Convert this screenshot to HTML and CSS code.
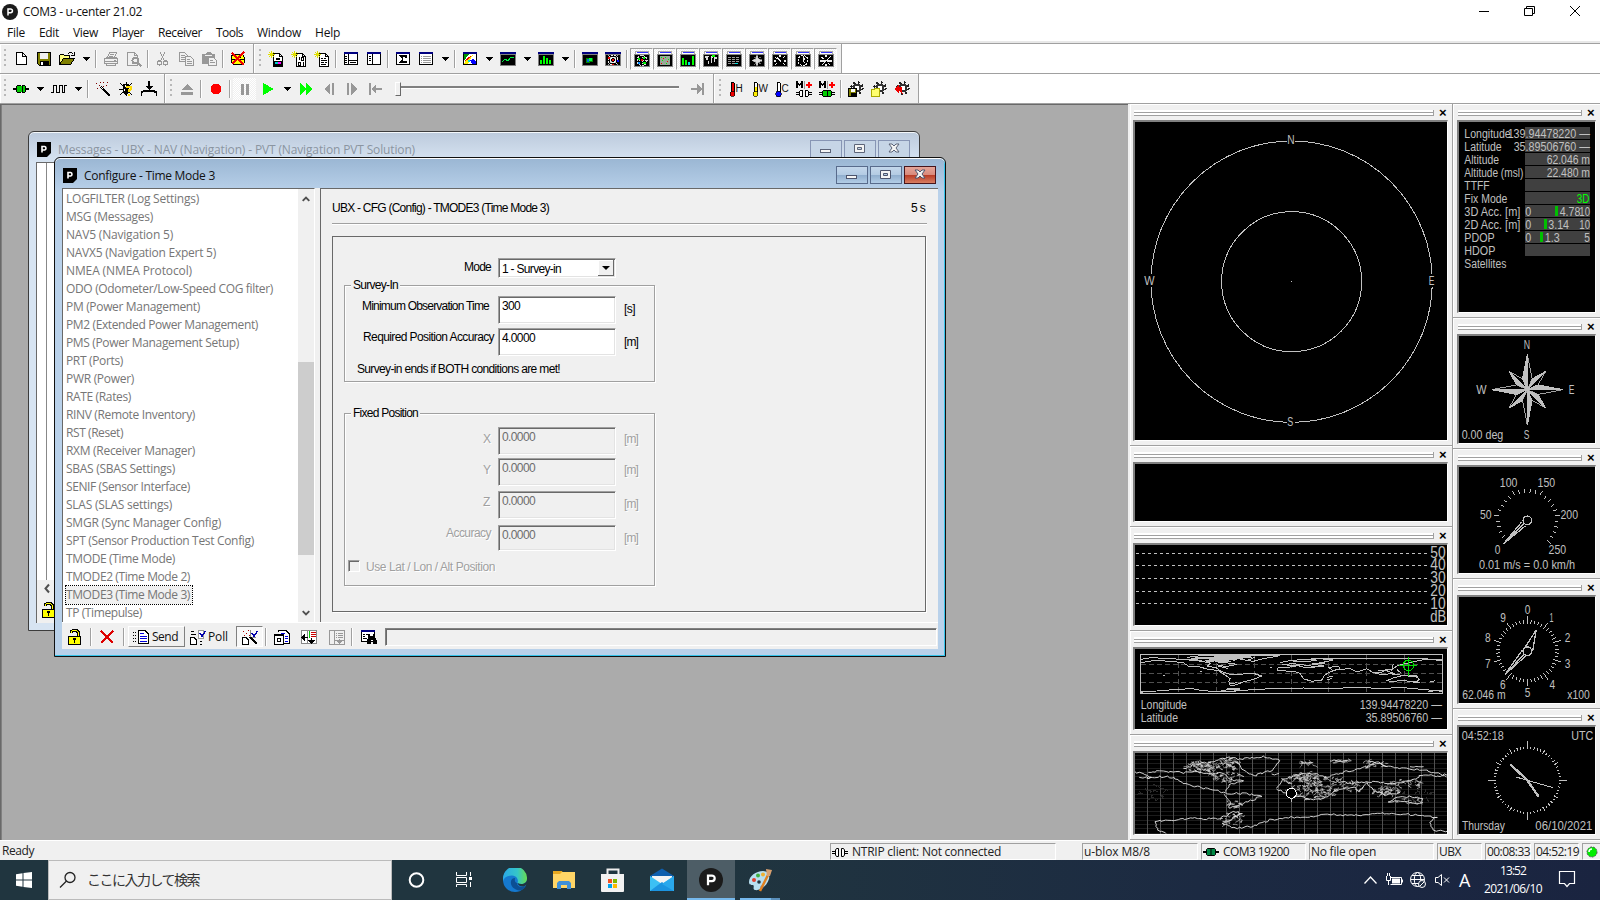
FILE: index.html
```html
<!DOCTYPE html>
<html lang="en">
<head>
<meta charset="utf-8">
<title>COM3 - u-center 21.02</title>
<link rel="stylesheet" href="styles.css">
</head>
<body>
<svg class="defs" width="0" height="0">
  <symbol id="plogo" viewBox="0 0 16 16"><circle cx="8" cy="8" r="8" fill="#1b1b1b"/><path d="M6 11.500V5h2.600a1.800 1.800 0 0 1 0 3.700H6" fill="none" stroke="#fff" stroke-width="1.500"/></symbol>
  <symbol id="psq" viewBox="0 0 14 15"><path d="M0 0H14V11L10 15H0Z" fill="#000"/><path d="M5 10.500V4.500h2.600a1.800 1.800 0 0 1 0 3.500H5" fill="none" stroke="#fff" stroke-width="1.600"/></symbol>
  <symbol id="new" viewBox="0 0 16 16"><path d="M3.500 1.500H9.500L13.500 5.500V13.500H3.500ZM9.500 1.500V5.500H13.500" fill="#fff" stroke="#000"/></symbol>
  <symbol id="save" viewBox="0 0 16 16"><path d="M1.500 1.500H14.500V14.500H3.500L1.500 12.500Z" fill="#808000" stroke="#000"/><path d="M4 2H12V8H4Z" fill="#f0f0f0"/><path d="M4 10H13V14H4Z"/><path d="M5 11H7V14H5Z" fill="#fff"/></symbol>
  <symbol id="open" viewBox="0 0 16 16"><path d="M.500 13.500V4.500L1.500 3.500H4.500L5.500 4.500H10.500V7.500" fill="#ffff80" stroke="#000"/><path d="M.500 13.500L4.500 7.500H15.500L11.500 13.500Z" fill="#808000" stroke="#000"/><path d="M9 2.500L10.500 1.500H12.500L14.500 3.500M12 4.500H15V1" fill="none" stroke="#000"/></symbol>
  <symbol id="print" viewBox="0 0 16 16"><g fill="none" stroke="#989898"><path d="M4.500 6.500L6.500 1.500H13.500L11.500 6.500M7 3.500H11M6 5.500H10M1.500 7.500H14.500V12.500H1.500ZM2 10.500H14M3.500 12.500V14.500H12.500V12.500M11 9.500H13M3 6.500H14"/></g></symbol>
  <symbol id="preview" viewBox="0 0 16 16"><g fill="none" stroke="#989898"><path d="M1.500 1.500H8.500L11.500 4.500V14.500H1.500ZM8.500 1.500V4.500H11.500"/><circle cx="9.500" cy="9.500" r="3" stroke-width="2"/><path d="M11.500 11.500L15.500 15.500" stroke-width="2"/></g></symbol>
  <symbol id="cut" viewBox="0 0 16 16"><g fill="none" stroke="#989898" stroke-width="1.300"><path d="M5 1L9.500 10M10 1L5.500 10"/><circle cx="4.500" cy="12" r="2"/><circle cx="10.500" cy="12" r="2"/></g></symbol>
  <symbol id="copy" viewBox="0 0 16 16"><g fill="#f0f0f0" stroke="#989898"><path d="M1.500 1.500H6.500L9.500 4.500V10.500H1.500ZM3 4.500H7M3 6.500H7M3 8.500H7"/><path d="M7.500 5.500H12.500L15.500 8.500V14.500H7.500ZM9 8.500H12M9 10.500H14M9 12.500H14"/></g></symbol>
  <symbol id="paste" viewBox="0 0 16 16"><path d="M1 3H4L6 1H9L11 3H14V13H1Z" fill="#989898"/><path d="M4 4H11" stroke="#f0f0f0"/><path d="M7.500 6.500H12.500L15.500 9.500V14.500H7.500ZM9 9.500H12M9 11.500H14" fill="#f0f0f0" stroke="#989898"/></symbol>
  <symbol id="clear" viewBox="0 0 16 16"><path d="M2.500 3.500H12.500L14.500 6.500V11.500L12.500 13.500H3.500L1.500 11.500V5.500Z" fill="#ff0" stroke="#000"/><path d="M2 8.500H14M5 6.500H11" stroke="#000"/><path d="M2 2L14 14M14 1L2 13" stroke="#e00" stroke-width="1.500"/></symbol>
  <symbol id="doc" viewBox="0 0 16 16"><path d="M5.500 2.500H11.500L14.500 5.500V15.500H5.500ZM11.500 2.500V5.500H14.500" fill="#fff" stroke="#000"/><path d="M3.500 0V7M0 3.500H7M1 1L6 6M6 1L1 6" stroke="#e0e000"/></symbol>
  <symbol id="docc" viewBox="0 0 16 16"><use href="#doc" width="16" height="16"/><path d="M8 6.500H12V9H8ZM6 10H14V15H6Z"/><path d="M7 11H10V13H7Z" fill="#0cc"/><path d="M10 11H13V13H10Z" fill="#f0f"/></symbol>
  <symbol id="docb" viewBox="0 0 16 16"><use href="#doc" width="16" height="16"/><path d="M8.500 6V9M10.500 6.500H12.500V9.500H10.500ZM7.500 11.500H9.500V14.500H7.500ZM12.500 11V15" fill="none" stroke="#000"/></symbol>
  <symbol id="doct" viewBox="0 0 16 16"><use href="#doc" width="16" height="16"/><path d="M7 7.500H9M10 7.500H12M7 9.500H13M7 11.500H10M11 11.500H13M7 13.500H12" stroke="#000"/></symbol>
  <symbol id="win" viewBox="0 0 16 16"><path d="M1.500 2.500H14.500V13.500H1.500Z" fill="#fff" stroke="#000"/><path d="M1 1H15V3H1Z" fill="#000080"/></symbol>
  <symbol id="win1" viewBox="0 0 16 16"><use href="#win" width="16" height="16"/><path d="M5.500 3V13M6 9.500H14M2 5.500H4M2 7.500H4M2 9.500H4M2 11.500H4M7 11.500H13" stroke="#000"/></symbol>
  <symbol id="win2" viewBox="0 0 16 16"><use href="#win" width="16" height="16"/><path d="M6.500 3V13M3 5.500H5M3 7.500H5M3 9.500H5" stroke="#000"/></symbol>
  <symbol id="win3" viewBox="0 0 16 16"><use href="#win" width="16" height="16"/><path d="M11 6.500V5H5.500L8 8L5.500 11H11V9.500" fill="none" stroke="#000" stroke-width="1.400"/></symbol>
  <symbol id="win4" viewBox="0 0 16 16"><use href="#win" width="16" height="16"/><path d="M3 5.500H4M5 5.500H13M3 7.500H4M5 7.500H13M3 9.500H4M5 9.500H13M3 11.500H4M5 11.500H13" stroke="#999"/></symbol>
  <symbol id="tri" viewBox="0 0 16 16"><path d="M4 6H12L8 10Z"/></symbol>
  <symbol id="chart" viewBox="0 0 16 16"><use href="#win" width="16" height="16"/><path d="M2 3H7L2 10Z" fill="#090"/><path d="M2 13L5 8L8 5L11 4L8 9L6 13Z" fill="#fe0"/><path d="M3 10L9 5" stroke="#e00"/><path d="M8 9L12 8L14 11V13H10Z" fill="#00f"/><path d="M6 9H8V11H6Z" fill="#0dd"/></symbol>
  <symbol id="dark" viewBox="0 0 16 16"><path d="M.500 1.500H15.500V14.500H.500Z" fill="#000" stroke="#808080"/><path d="M0 1H16V3H0Z" fill="#000080"/><path d="M1 3.500H15" stroke="#808080"/></symbol>
  <symbol id="tog" viewBox="0 0 16 16"><path d="M.500 3.500H15.500V15.500H.500Z" fill="#000" stroke="#888"/><path d="M1.500 3V.500H14.500V3" fill="#fff" stroke="#aaa"/><path d="M3 1.500H14" stroke="#33f"/></symbol>
  <symbol id="line" viewBox="0 0 16 16"><use href="#dark" width="16" height="16"/><path d="M2 11L5 8L8 10L11 6L14 7" fill="none" stroke="#0e4"/></symbol>
  <symbol id="hist" viewBox="0 0 16 16"><use href="#dark" width="16" height="16"/><path d="M2 9H4V13H2ZM5 5H7V13H5ZM8 7H10V13H8ZM11 9H13V13H11Z" fill="#0f0"/></symbol>
  <symbol id="cam" viewBox="0 0 16 16"><use href="#dark" width="16" height="16"/><path d="M4 7H11V11H8V12H4Z" fill="#080"/><path d="M7 7H10V10H7Z" fill="#0f4"/><path d="M5 8H7V11H5Z" fill="#06d"/></symbol>
  <symbol id="tgt" viewBox="0 0 16 16"><use href="#dark" width="16" height="16"/><g fill="none" stroke="#eee"><circle cx="8" cy="9" r="5" stroke-dasharray="2 1"/><circle cx="8" cy="9" r="2.500"/><path d="M3 4L13 14M13 4L3 14" stroke-width=".700"/></g><path d="M3 6H5V8H3Z" fill="#e00"/><path d="M12 9H14V11H12Z" fill="#00f"/><path d="M7 8H9V10H7ZM7 13H9V14H7Z" fill="#e00"/></symbol>
  <symbol id="sky" viewBox="0 0 16 16"><use href="#tog" width="16" height="16"/><g fill="none" stroke="#ddd"><circle cx="8" cy="9.500" r="5" stroke-dasharray="2 1"/><path d="M8 4V15M2.500 9.500H13.500" stroke-dasharray="1 1"/></g><path d="M4 7H6V9H4ZM9 6H11V8H9ZM9 11H12V13H9Z" fill="#0e0"/><path d="M7 8H9V10H7Z" fill="#e00"/><path d="M4 11H6V13H4Z" fill="#08f"/></symbol>
  <symbol id="dots" viewBox="0 0 16 16"><use href="#tog" width="16" height="16"/><path d="M3 5H13V14H3Z" fill="#9a9"/><path d="M4 6H5V7H4ZM8 6H9V7H8ZM11 8H12V9H11ZM5 9H6V10H5ZM9 12H10V13H9Z" fill="#0e0"/><path d="M6 7H7V8H6ZM10 10H11V11H10ZM4 12H5V13H4Z" fill="#e00"/></symbol>
  <symbol id="bars" viewBox="0 0 16 16"><use href="#tog" width="16" height="16"/><path d="M2 7H4V14H2ZM5 9H7V14H5ZM12 5H14V14H12Z" fill="#0f0"/><path d="M8 11H10V14H8Z" fill="#0dd"/></symbol>
  <symbol id="wmap" viewBox="0 0 16 16"><use href="#tog" width="16" height="16"/><path d="M2 5H6V6H5V9H3V7H2ZM5 10H6V13H5ZM8 5H10V7H9V12H8ZM11 6H14V8H12V11H11Z" fill="#ddd"/><path d="M9 4H12V6H9Z" fill="#0f0"/></symbol>
  <symbol id="table" viewBox="0 0 16 16"><use href="#tog" width="16" height="16"/><path d="M2 6.500H14M2 8.500H14M2 10.500H14M2 12.500H9" stroke="#999" stroke-dasharray="3 1"/><path d="M9 12.500H12" stroke="#0dd"/></symbol>
  <symbol id="rose" viewBox="0 0 16 16"><use href="#tog" width="16" height="16"/><path d="M8 4L9.500 8L13 9.500L9.500 11L8 15L6.500 11L3 9.500L6.500 8ZM4.500 6L7 8M11.500 6L9 8M4.500 13L7 11M11.500 13L9 11" fill="#ddd" stroke="#bbb" stroke-width=".600"/></symbol>
  <symbol id="spd" viewBox="0 0 16 16"><use href="#tog" width="16" height="16"/><path d="M3 6L5 8M8 4V6M13 5L11 7M2 10H4M12 10H14M3 14L5 12M13 14L11 12M5 6L9 11" stroke="#eee" stroke-width="1.200"/></symbol>
  <symbol id="clk" viewBox="0 0 16 16"><use href="#tog" width="16" height="16"/><path d="M8 5V10L10 12M8 10L10 7" stroke="#eee" fill="none"/><circle cx="8" cy="9.500" r="5" fill="none" stroke="#eee" stroke-dasharray="2 1"/></symbol>
  <symbol id="alt" viewBox="0 0 16 16"><use href="#tog" width="16" height="16"/><path d="M3 6L6 8M8 4V6M13 5L8 10H2M9 10H14M4 14L7 11M12 14L10 12M8 13V15" stroke="#eee" fill="none" stroke-width="1.200"/></symbol>
  <symbol id="plug" viewBox="0 0 16 16"><path d="M0 8H16" stroke="#000" stroke-width="2"/><path d="M4.500 4.500H7V11.500H4.500L3.500 10.500V5.500ZM9 4.500H11.500L12.500 5.500V10.500L11.500 11.500H9Z" fill="#0c0" stroke="#000"/><path d="M7 5H9V11H7Z" fill="#0c0"/></symbol>
  <symbol id="plugd" viewBox="0 0 16 16"><path d="M0 8H16" stroke="#000" stroke-width="2"/><path d="M4.500 4.500H11.500L12.500 5.500V10.500L11.500 11.500H4.500L3.500 10.500V5.500Z" fill="#084" stroke="#000"/><path d="M8 5V11" stroke="#000"/></symbol>
  <symbol id="unplug" viewBox="0 0 16 16"><path d="M0 7.500H4M12 7.500H16M0 9.500H4M12 9.500H16" stroke="#000"/><path d="M6.500 4.500H4.500L3.500 6V11L4.500 12.500H6.500ZM9.500 4.500H11.500L12.500 6V11L11.500 12.500H9.500Z" fill="#fff" stroke="#000"/></symbol>
  <symbol id="wave" viewBox="0 0 16 16"><path d="M0 11.500H2.500V4.500H5.500V11.500H8.500V4.500H11.500V11.500H13.500V4.500H16" fill="none" stroke="#000"/></symbol>
  <symbol id="wand" viewBox="0 0 16 16"><path d="M6 6L15 15" stroke="#000" stroke-width="2"/><path d="M6 6L8 8" stroke="#fff"/><path d="M1 2H2V3H1ZM4 4H5V5H4ZM8 1H9V2H8ZM11 4H12V5H11ZM2 7H3V8H2ZM8 5H9V6H8ZM5 1H6V2H5ZM12 1H13V2H12Z" fill="#800000"/></symbol>
  <symbol id="bug" viewBox="0 0 16 16"><path d="M2 2L14 14M14 2L2 14M1 8H14M8 1V15" stroke="#000"/><path d="M5 3H11V12L8 14L5 12Z"/><path d="M7 4H8V6H7ZM6 8H7V10H6Z" fill="#fff"/><path d="M8.500 7V5.500H12.500V8.500L10.500 9.500V11M10.500 12.500V14.500" fill="none" stroke="#fd0" stroke-width="2"/></symbol>
  <symbol id="dl" viewBox="0 0 16 16"><path d="M8 0V7M0 14.500V11.500L4 9.500H12L15.500 11.500V14.500" fill="none" stroke="#000" stroke-width="2"/><path d="M4 5H12L8 9Z"/></symbol>
  <symbol id="eject" viewBox="0 0 16 16"><path d="M2 9L8 3L14 9ZM2 11H14V14H2Z" fill="#989898"/></symbol>
  <symbol id="rec" viewBox="0 0 16 16"><circle cx="8" cy="8" r="5.500" fill="red"/></symbol>
  <symbol id="pause" viewBox="0 0 16 16"><path d="M4 3H7V14H4ZM9 3H12V14H9Z" fill="#989898"/></symbol>
  <symbol id="play" viewBox="0 0 16 16"><path d="M3 2L14 8L3 14Z" fill="#0f0"/></symbol>
  <symbol id="ff" viewBox="0 0 16 16"><path d="M2 2L8 8L2 14ZM8 2L14 8L8 14Z" fill="#0f0"/></symbol>
  <symbol id="sb" viewBox="0 0 16 16"><path d="M9 2V14L3 8ZM11 2H13V14H11Z" fill="#989898"/></symbol>
  <symbol id="sf" viewBox="0 0 16 16"><path d="M3 2H5V14H3ZM7 2L13 8L7 14Z" fill="#989898"/></symbol>
  <symbol id="home" viewBox="0 0 16 16"><path d="M2 2H4V14H2ZM4 8L9 3V7H15V9H9V13Z" fill="#989898"/></symbol>
  <symbol id="end" viewBox="0 0 16 16"><path d="M12 2H14V14H12ZM12 8L7 3V7H1V9H7V13Z" fill="#989898"/></symbol>
  <symbol id="tube" viewBox="0 0 16 16"><path d="M3 11V2L4 1H5L6 2V11" fill="#fff" stroke="#000"/></symbol>
  <symbol id="thh" viewBox="0 0 16 16"><use href="#tube" width="16" height="16"/><path d="M3.500 2H5.500V12H3.500Z" fill="#e00"/><circle cx="4.500" cy="13" r="2.500" fill="#e00" stroke="#000" stroke-width=".700"/></symbol>
  <symbol id="thw" viewBox="0 0 16 16"><use href="#tube" width="16" height="16"/><path d="M3.500 6H5.500V12H3.500Z" fill="#fe0"/><circle cx="4.500" cy="13" r="2.500" fill="#fe0" stroke="#000" stroke-width=".700"/></symbol>
  <symbol id="thc" viewBox="0 0 16 16"><use href="#tube" width="16" height="16"/><circle cx="4.500" cy="13" r="2.700" fill="#00f" stroke="#000" stroke-width=".700"/></symbol>
  <symbol id="mp" viewBox="0 0 16 16"><path d="M1 7V1L3.500 4L6 1V7" fill="none" stroke="#000" stroke-width="1.600"/><path d="M8.500 0V8" stroke="#999"/><path d="M13 1V7M10 4H16" stroke="red" stroke-width="2"/></symbol>
  <symbol id="mu" viewBox="0 0 16 16"><use href="#mp" width="16" height="16"/><path d="M0 11.500H3M0 13.500H3M13 11.500H16M13 13.500H16" stroke="#000"/><path d="M6.500 9.500H4.500L3.500 11V14L4.500 15.500H6.500ZM9.500 9.500H11.500L12.500 11V14L11.500 15.500H9.500Z" fill="#fff" stroke="#000"/></symbol>
  <symbol id="mg" viewBox="0 0 16 16"><use href="#mp" width="16" height="16"/><path d="M0 11.500H16M0 13.500H16" stroke="#000"/><path d="M4.500 9.500H11.500L12.500 11V14L11.500 15.500H4.500L3.500 14V11Z" fill="#0c0" stroke="#000"/><path d="M8 9V16" stroke="#000"/></symbol>
  <symbol id="gear" viewBox="0 0 16 16"><circle cx="9" cy="7" r="5.700" fill="none" stroke="#222" stroke-width="2" stroke-dasharray="2 2.480"/><circle cx="9" cy="7" r="3.300" fill="#fff" stroke="#333" stroke-width="2.500"/></symbol>
  <symbol id="g1" viewBox="0 0 16 16"><use href="#gear" width="16" height="16"/><path d="M.500 7.500H8.500V15.500H.500Z" fill="#808000" stroke="#000"/><path d="M3 8H7V11H3Z" fill="#fff"/><path d="M3 12H8V15H3Z"/></symbol>
  <symbol id="g2" viewBox="0 0 16 16"><use href="#gear" width="16" height="16"/><path d="M.500 8.500H3L4 7.500H8.500V15.500H.500Z" fill="#ffff70" stroke="#aa0"/></symbol>
  <symbol id="g3" viewBox="0 0 16 16"><use href="#gear" width="16" height="16"/><path d="M0 8L5 4V6H8V10L9 13L5 10V12Z" fill="#e00"/></symbol>
  <symbol id="lock" viewBox="0 0 16 16"><path d="M5.500 4V2.500L7 1.500H10.500L12.500 3.500V7" fill="none" stroke="#000" stroke-width="3"/><path d="M5.500 4V2.500L7 1.500H10.500L12.500 3.500V7" fill="none" stroke="#ff0"/><path d="M2.500 7.500H14.500V15.500H2.500Z" fill="#ff0" stroke="#000"/><path d="M7 9H10V11H9V14H8V11H7Z"/></symbol>
  <symbol id="del" viewBox="0 0 16 16"><path d="M2 2L14 14M14 2L2 14" stroke="#d00" stroke-width="1.700"/></symbol>
  <symbol id="send" viewBox="0 0 16 16"><path d="M0 3.500H4M0 6.500H4M0 9.500H4M0 12.500H4" stroke="#000" stroke-dasharray="1 1"/><path d="M5.500 1.500H12L15.500 5V14.500H5.500Z" fill="#fff" stroke="#000"/><path d="M7 4.500H11M7 7H14M7 9.500H14M7 12H14" stroke="#00d"/></symbol>
  <symbol id="poll" viewBox="0 0 16 16"><path d="M.500 8.500H4L6.500 11V15.500H.500Z" fill="#fff" stroke="#000"/><path d="M8.500 1.500H13V9.500H8.500Z" fill="#fff" stroke="#999"/><path d="M10 4L12 7L15.500 2" fill="none" stroke="#00a" stroke-width="1.500"/><path d="M1 2.500H4M1 5.500H6M10 12.500H12M10 15.500H12" stroke="#000"/></symbol>
  <symbol id="auto" viewBox="0 0 16 16"><path d="M.500 8.500H4L6.500 11V15.500H.500Z" fill="#fff" stroke="#000"/><path d="M10 4L12 7L15.500 2" fill="none" stroke="#00a" stroke-width="1.500"/><path d="M8 8L15 15" stroke="#000" stroke-width="2"/><path d="M1 2H2V3H1ZM4 4H5V5H4ZM6 1H7V2H6ZM7 6H8V7H7ZM2 6H3V7H2Z" fill="#a00"/><path d="M8.500 1V8M10 8.500H14" stroke="#888"/></symbol>
  <symbol id="t1" viewBox="0 0 16 16"><path d="M4.500 3V1.500H12L15.500 5V14.500H10" fill="#fff" stroke="#000"/><path d="M7 4.500H11M11 7H14M11 9.500H14M11 12H14" stroke="#00d"/><path d="M.500 5.500H9.500V15.500H.500Z" fill="#fff" stroke="#000"/><path d="M1 5H9V7H1Z"/><path d="M3.500 13V9.500H6.500V12.500H4" fill="none" stroke="#000"/></symbol>
  <symbol id="t2" viewBox="0 0 16 16"><path d="M.500 1.500H15.500V14.500H.500ZM6.500 2V14" fill="#fff" stroke="#888"/><path d="M10 3.500H15M10 5.500H15M10 7.500H15" stroke="#c00"/><path d="M8.500 2V9" stroke="#0c0"/><path d="M1 8.500H7M10.500 9V14" stroke="#000" stroke-width="1.500"/><path d="M0 8.500L4 5V12ZM7 11H14L10.500 15Z"/></symbol>
  <symbol id="t3" viewBox="0 0 16 16"><g fill="none" stroke="#989898"><path d="M.500 1.500H15.500V15.500H.500ZM5.500 2V15M6 11.500H15M7 4.500H8M9 4.500H14M7 6.500H8M9 6.500H14M7 8.500H8M9 8.500H14M10.500 10V15"/></g><path d="M7 12H14L10.500 15Z" fill="#989898"/></symbol>
  <symbol id="t4" viewBox="0 0 16 16"><path d="M.500 1.500H13.500V12.500H.500Z" fill="#fff" stroke="#000"/><path d="M0 1H14V3H0Z" fill="#000080"/><path d="M2 5.500H4M5 5.500H8M2 7.500H4M2 9.500H6" stroke="#000"/><path d="M7 5H9V7H12V5H14V8L16 12V15H12V11H10V15H6V12L7 8Z"/></symbol>
</svg>

<div class="app">
  <header class="title">
    <svg class="ic"><use href="#plogo"/></svg><span data-w="119">COM3 - u-center 21.02</span>
    <svg class="wc" width="120" height="20" viewBox="1474 0 120 20"><path d="M1479 10.500H1489M1524.500 7.500H1532.500V14.500H1524.500ZM1526.500 7.500V5.500H1534.500V12.500H1532.500" class="ln"/><path d="M1570 5L1580 15M1580 5L1570 15" fill="none" stroke="#000"/></svg>
  </header>
  <nav class="menu"><span data-w="18">File</span><span data-w="20">Edit</span><span data-w="25">View</span><span data-w="32">Player</span><span data-w="44">Receiver</span><span data-w="27">Tools</span><span data-w="44">Window</span><span data-w="25">Help</span></nav>

  <div class="bars">
    <div class="tbrow">
      <div class="tb w1"><i class="grip"></i><b><svg><use href="#new"/></svg></b><b><svg><use href="#save"/></svg></b><b><svg><use href="#open"/></svg></b><b class="a"><svg><use href="#tri"/></svg></b><i class="s"></i><b><svg><use href="#print"/></svg></b><b><svg><use href="#preview"/></svg></b><i class="s"></i><b><svg><use href="#cut"/></svg></b><b><svg><use href="#copy"/></svg></b><b><svg><use href="#paste"/></svg></b><i class="s"></i><b><svg><use href="#clear"/></svg></b></div>
      <div class="tb w2"><i class="grip"></i><b><svg><use href="#docc"/></svg></b><b><svg><use href="#docb"/></svg></b><b><svg><use href="#doct"/></svg></b><i class="s"></i><b><svg><use href="#win1"/></svg></b><b><svg><use href="#win2"/></svg></b><i class="s"></i><b><svg><use href="#win3"/></svg></b><b><svg><use href="#win4"/></svg></b><b class="a"><svg><use href="#tri"/></svg></b><i class="s"></i><b><svg><use href="#chart"/></svg></b><b class="a"><svg><use href="#tri"/></svg></b><b><svg><use href="#line"/></svg></b><b class="a"><svg><use href="#tri"/></svg></b><b><svg><use href="#hist"/></svg></b><b class="a"><svg><use href="#tri"/></svg></b><i class="s"></i><b><svg><use href="#cam"/></svg></b><b><svg><use href="#tgt"/></svg></b><i class="s"></i><b class="on"><svg><use href="#sky"/></svg></b><b class="on"><svg><use href="#dots"/></svg></b><b class="on"><svg><use href="#bars"/></svg></b><b class="on"><svg><use href="#wmap"/></svg></b><b class="on"><svg><use href="#table"/></svg></b><b class="on"><svg><use href="#rose"/></svg></b><b class="on"><svg><use href="#spd"/></svg></b><b class="on"><svg><use href="#clk"/></svg></b><b class="on"><svg><use href="#alt"/></svg></b></div>
    </div>
    <div class="tbrow">
      <div class="tb w3"><i class="grip"></i><b><svg><use href="#plug"/></svg></b><b class="a"><svg><use href="#tri"/></svg></b><b><svg><use href="#wave"/></svg></b><b class="a"><svg><use href="#tri"/></svg></b><i class="s"></i><b><svg><use href="#wand"/></svg></b><b><svg><use href="#bug"/></svg></b><b><svg><use href="#dl"/></svg></b></div>
      <div class="tb w4"><i class="grip"></i><b><svg><use href="#eject"/></svg></b><i class="s"></i><b><svg><use href="#rec"/></svg></b><i class="s"></i><b class="chk"><svg><use href="#pause"/></svg></b><b><svg><use href="#play"/></svg></b><b class="a"><svg><use href="#tri"/></svg></b><b><svg><use href="#ff"/></svg></b><b><svg><use href="#sb"/></svg></b><b><svg><use href="#sf"/></svg></b><b><svg><use href="#home"/></svg></b><div class="slider"><i class="thumb"></i><i class="track"></i></div><b class="last"><svg><use href="#end"/></svg></b></div>
      <div class="tb w5"><i class="grip"></i><b class="th"><svg><use href="#thh"/></svg><em>H</em></b><b class="th"><svg><use href="#thw"/></svg><em>W</em></b><b class="th"><svg><use href="#thc"/></svg><em>C</em></b><b><svg><use href="#mu"/></svg></b><b><svg><use href="#mg"/></svg></b><i class="s"></i><b><svg><use href="#g1"/></svg></b><b><svg><use href="#g2"/></svg></b><b><svg><use href="#g3"/></svg></b></div>
    </div>
  </div>

  <main class="work">
    <section class="mdi">
      <div class="win back">
        <div class="wt"><svg class="psq"><use href="#psq"/></svg><span data-w="357">Messages - UBX - NAV (Navigation) - PVT (Navigation PVT Solution)</span>
          <svg class="ctl" width="100" height="18" viewBox="0 0 100 18"><g fill="#c6d5e6" stroke="#8795b4"><rect x=".500" y=".500" width="31" height="17"/><rect x="34.500" y=".500" width="31" height="17"/><rect x="68.500" y=".500" width="31" height="17"/></g><g fill="#f4f4f4" stroke="#5c6478"><rect x="10.500" y="9.500" width="10" height="3"/><path d="M44.500 4.500H54.500V12.500H44.500ZM47.500 7.500H51.500V9.500H47.500Z" fill-rule="evenodd"/><path d="M79 4H82L84 6L86 4H89L86 8L89 12H86L84 10L82 12H79L82 8Z"/></g></svg></div>
        <div class="bclient"><div class="tree"></div><svg class="bsc" viewBox="0 0 17 16"><path d="M12 4L8.500 8L12 12" fill="none" stroke="#505050" stroke-width="2"/></svg><div class="btool"><svg><use href="#lock"/></svg></div></div>
      </div>
      <div class="win front">
        <div class="wt"><svg class="psq"><use href="#psq"/></svg><span data-w="131">Configure - Time Mode 3</span>
          <svg class="ctl" width="100" height="18" viewBox="0 0 100 18"><defs><linearGradient id="cb" x2="0" y2="1"><stop offset="0" stop-color="#c5d8ec"/><stop offset=".5" stop-color="#b3cbe3"/><stop offset=".5" stop-color="#8fadcd"/><stop offset="1" stop-color="#b5cfe8"/></linearGradient><linearGradient id="cr" x2="0" y2="1"><stop offset="0" stop-color="#e5a79b"/><stop offset=".48" stop-color="#d98a7c"/><stop offset=".5" stop-color="#b83a24"/><stop offset="1" stop-color="#d98266"/></linearGradient></defs><g fill="url(#cb)" stroke="#586b8c"><rect x=".500" y=".500" width="31" height="17"/><rect x="34.500" y=".500" width="31" height="17"/><rect x="68.500" y=".500" width="31" height="17" fill="url(#cr)" stroke="#47151b"/></g><g fill="#f4f4f4" stroke="#4c546c"><rect x="10.500" y="9.500" width="10" height="3"/><path d="M44.500 4.500H54.500V12.500H44.500ZM47.500 7.500H51.500V9.500H47.500Z" fill-rule="evenodd"/><path d="M79 4H82L84 6L86 4H89L86 8L89 12H86L84 10L82 12H79L82 8Z"/></g></svg></div>
        <div class="client">
          <div class="split">
            <div class="list">
              <div class="rows">
                <p data-w="133">LOGFILTER (Log Settings)</p><p data-w="87">MSG (Messages)</p><p data-w="107">NAV5 (Navigation 5)</p><p data-w="150">NAVX5 (Navigation Expert 5)</p><p data-w="126">NMEA (NMEA Protocol)</p><p data-w="207">ODO (Odometer/Low-Speed COG filter)</p><p data-w="134">PM (Power Management)</p><p data-w="192">PM2 (Extended Power Management)</p><p data-w="173">PMS (Power Management Setup)</p><p data-w="57">PRT (Ports)</p><p data-w="68">PWR (Power)</p><p data-w="65">RATE (Rates)</p><p data-w="129">RINV (Remote Inventory)</p><p data-w="57">RST (Reset)</p><p data-w="129">RXM (Receiver Manager)</p><p data-w="109">SBAS (SBAS Settings)</p><p data-w="124">SENIF (Sensor Interface)</p><p data-w="106">SLAS (SLAS settings)</p><p data-w="155">SMGR (Sync Manager Config)</p><p data-w="188">SPT (Sensor Production Test Config)</p><p data-w="109">TMODE (Time Mode)</p><p data-w="124">TMODE2 (Time Mode 2)</p><p data-w="124" class="sel">TMODE3 (Time Mode 3)</p><p data-w="76">TP (Timepulse)</p>
              </div>
              <div class="scroll"><svg viewBox="0 0 17 17"><path d="M5 10.500L8.500 7L12 10.500" fill="none" stroke="#505050" stroke-width="2"/></svg><i></i><svg viewBox="0 0 17 17"><path d="M5 6.500L8.500 10L12 6.500" fill="none" stroke="#505050" stroke-width="2"/></svg></div>
            </div>
            <div class="pane">
              <div class="phead"><span data-w="217">UBX - CFG (Config) - TMODE3 (Time Mode 3)</span><span data-w="14">5 s</span></div>
              <div class="form">
                <div class="row mode"><label><span data-w="27">Mode</span></label><div class="inp combo"><span data-w="59">1 - Survey-in</span><i><svg viewBox="0 0 16 16"><use href="#tri"/></svg></i></div></div>
                <div class="group g1"><span class="leg" data-w="45">Survey-In</span>
                  <div class="row r1"><label><span data-w="127">Minimum Observation Time</span></label><div class="inp"><span data-w="18">300</span></div><em data-w="11">[s]</em></div>
                  <div class="row r2"><label><span data-w="131">Required Position Accuracy</span></label><div class="inp"><span data-w="33">4.0000</span></div><em data-w="14">[m]</em></div>
                  <div class="note"><span data-w="203">Survey-in ends if BOTH conditions are met!</span></div>
                </div>
                <div class="group g2"><span class="leg" data-w="65">Fixed Position</span>
                  <div class="row x1"><label><span data-w="8">X</span></label><div class="inp"><span data-w="33">0.0000</span></div><em data-w="14">[m]</em></div>
                  <div class="row x2"><label><span data-w="8">Y</span></label><div class="inp"><span data-w="33">0.0000</span></div><em data-w="14">[m]</em></div>
                  <div class="row x3"><label><span data-w="8">Z</span></label><div class="inp"><span data-w="33">0.0000</span></div><em data-w="14">[m]</em></div>
                  <div class="row x4"><label><span data-w="45">Accuracy</span></label><div class="inp"><span data-w="33">0.0000</span></div><em data-w="14">[m]</em></div>
                  <div class="check"><i></i><span data-w="129">Use Lat / Lon / Alt Position</span></div>
                </div>
              </div>
            </div>
          </div>
          <div class="wtool"><svg><use href="#lock"/></svg><i class="s"></i><svg><use href="#del"/></svg><i class="s"></i><div class="send"><svg><use href="#send"/></svg><span data-w="26">Send</span></div><svg><use href="#poll"/></svg><span data-w="20" class="pl">Poll</span><div class="auto"><svg><use href="#auto"/></svg></div><i class="s"></i><svg class="m1"><use href="#t1"/></svg><svg class="m2"><use href="#t2"/></svg><svg class="m3"><use href="#t3"/></svg><i class="s m4"></i><svg class="m5"><use href="#t4"/></svg><div class="field"></div></div>
        </div>
      </div>
    </section>

    <aside class="dock">
      <div class="col c1">
        <div class="pn" style="height:342px"><div class="gr"><i></i><span>×</span></div><div class="bx"><svg viewBox="45 66 936 954"><circle cx="515" cy="545" r="422"/><circle cx="515" cy="545" r="210"/><g class="k"><rect x="500" y="100" width="26" height="40"/><rect x="500" y="945" width="26" height="40"/><rect x="75" y="523" width="30" height="38"/><rect x="922" y="523" width="24" height="38"/></g><path d="M514 545H517"/><text x="502" y="131" textLength="22">N</text><text x="502" y="977" textLength="18">S</text><text x="73" y="554" textLength="31">W</text><text x="926" y="555" textLength="17">E</text></svg></div></div>
        <div class="pn" style="height:81px"><div class="gr"><i></i><span>×</span></div><div class="bx"></div></div>
        <div class="pn" style="height:104px"><div class="gr"><i></i><span>×</span></div><div class="bx"><svg viewBox="45 315 936 240"><path stroke-dasharray="9 9" d="M48 341H924M48 377H924M48 415H924M48 454H924M48 491H924"/><g class="db"><text x="931" y="354" textLength="46">50</text><text x="931" y="391" textLength="46">40</text><text x="931" y="430" textLength="46">30</text><text x="931" y="469" textLength="46">20</text><text x="931" y="507" textLength="46">10</text><text x="931" y="547" textLength="48">dB</text></g></svg></div></div>
        <div class="pn" style="height:104px"><div class="gr"><i></i><span>×</span></div><div class="bx"><svg viewBox="45 87 936 240">
          <path class="dg" stroke-dasharray="15 9" d="M176 104V220M290 104V220M404 104V220M514 104V220M626 104V220M740 104V220M853 104V220M62 133H967M62 160H967M62 187H967"/>
          <path class="f" d="M290 104H358L385 106L400 112L380 114L352 118L345 122L322 120L340 127L310 126L300 130L285 124L262 130L255 120L290 116L240 118L205 122L215 113L280 110Z"/>
          <path class="land" d="M62 118L95 113L150 116L200 119L245 124L272 130L262 138L290 144L300 152L320 160L335 165L370 162L400 160L425 168L400 178L370 186L345 195L330 196L326 184L330 176L314 164L295 152L262 147L235 140L205 138L190 128L150 124L105 121L62 128M210 122H245M202 112L250 106H300M295 138L325 146M300 125L350 133L318 140L290 134M345 108L405 106L480 107L430 116L400 124L362 118L345 108M405 112L380 122M480 128L510 122L550 118L600 116L640 120L605 128L575 132L612 138L560 144L535 137L510 141L475 142L472 152L520 154L540 160L550 176L575 184L605 180L612 168L625 158L645 150L660 148L690 146L712 156L740 146L756 156L782 158L800 148L815 150L830 138L860 130L905 120L967 118M485 134L520 131L560 136L590 141M520 126L590 122M625 142L655 139L660 146L640 152ZM570 120L605 114L700 114L820 116L905 115L967 122M622 172L640 168M622 178L636 176M765 160L790 164L820 160L800 152L775 152M820 132L815 152M830 148L842 158M800 182L820 174L850 166L888 166L898 178L890 186L850 182L815 184ZM880 186L900 186M815 162L895 172M930 186L945 182M62 214L110 213L160 209L215 206L250 212L300 216L350 213L395 209L435 207L500 206L550 204L640 206L700 202L780 205L850 203L905 208L967 214M300 214L330 207L370 212M925 214L967 211M62 216L70 218M450 142H455M240 155H246M130 165H134"/>
          <path d="M320 205L360 207L340 214M330 192L350 188M590 130H615M500 137H530"/>
          <rect x="61" y="103" width="906" height="117" fill="none"/>
          <g class="gn"><circle cx="865" cy="136" r="16"/><path d="M865 111V168M838 136H891"/></g>
          <text x="62" y="267" textLength="139">Longitude</text><text x="62" y="306" textLength="112">Latitude</text><text x="719" y="267" textLength="247">139.94478220 —</text><text x="737" y="306" textLength="229">35.89506760 —</text></svg></div></div>
        <div class="pn" style="height:105px"><div class="gr"><i></i><span>×</span></div><div class="bx"><svg id="world" viewBox="45 399 936 243"></svg></div></div>
      </div>
      <div class="col c2">
        <div class="pn" style="height:214px"><div class="gr"><i></i><span>×</span></div><div class="bx"><svg viewBox="1017 66 408 570">
          <path class="cell" d="M1215 81H1410V117H1215ZM1215 120H1410V156H1215ZM1215 159H1410V195H1215ZM1215 198H1410V234H1215ZM1215 237H1410V273H1215ZM1215 276H1410V312H1215ZM1215 315H1410V351H1215ZM1215 354H1410V390H1215ZM1215 393H1410V429H1215ZM1215 432H1410V468H1215Z"/>
          <path class="gb" d="M1305 318H1314V348H1305ZM1272 357H1281V387H1272ZM1260 396H1269V426H1260Z"/>
          <text x="1033" y="114" textLength="139">Longitude</text><text x="1033" y="153" textLength="112">Latitude</text><text x="1033" y="192" textLength="104">Altitude</text><text x="1033" y="231" textLength="177">Altitude (msl)</text><text x="1033" y="270" textLength="76">TTFF</text><text x="1033" y="309" textLength="129">Fix Mode</text><text x="1033" y="348" textLength="168">3D Acc. [m]</text><text x="1033" y="387" textLength="168">2D Acc. [m]</text><text x="1033" y="426" textLength="91">PDOP</text><text x="1033" y="465" textLength="93">HDOP</text><text x="1033" y="504" textLength="126">Satellites</text>
          <text x="1163" y="114" textLength="247">139.94478220 —</text><text x="1181" y="153" textLength="229">35.89506760 —</text><text x="1280" y="192" textLength="130">62.046 m</text><text x="1280" y="231" textLength="130">22.480 m</text><text x="1370" y="309" textLength="38" class="g">3D</text><text x="1216" y="348" textLength="18">0</text><text x="1319" y="348" textLength="62">4.78</text><text x="1378" y="348" textLength="32">10</text><text x="1216" y="387" textLength="18">0</text><text x="1285" y="387" textLength="62">3.14</text><text x="1378" y="387" textLength="32">10</text><text x="1216" y="426" textLength="18">0</text><text x="1274" y="426" textLength="45">1.3</text><text x="1393" y="426" textLength="17">5</text></svg></div></div>
        <div class="pn" style="height:131px"><div class="gr"><i></i><span>×</span></div><div class="bx"><svg viewBox="1017 708 408 321">
          <g id="roseg" transform="translate(1222 869)"></g>
          <text x="1211" y="747" textLength="19">N</text><text x="1211" y="1017" textLength="17">S</text><text x="1069" y="881" textLength="31">W</text><text x="1346" y="881" textLength="17">E</text><text x="1025" y="1017" textLength="125">0.00 deg</text></svg></div></div>
        <div class="pn" style="height:130px"><div class="gr"><i></i><span>×</span></div><div class="bx"><svg viewBox="1017 80 408 320">
          <path id="spt"/><path class="ndl" d="M1150 312L1222 241M1150 312L1205 246M1150 312L1216 258"/><circle class="hub" cx="1222" cy="241" r="13"/>
          <text x="1139" y="140" textLength="53">100</text><text x="1253" y="140" textLength="53">150</text><text x="1079" y="236" textLength="35">50</text><text x="1322" y="236" textLength="53">200</text><text x="1124" y="344" textLength="17">0</text><text x="1286" y="344" textLength="53">250</text><text x="1076" y="387" textLength="290">0.01 m/s = 0.0 km/h</text></svg></div></div>
        <div class="pn" style="height:130px"><div class="gr"><i></i><span>×</span></div><div class="bx"><svg viewBox="1017 -72 408 321">
          <path id="alt2"/><path class="ndl" d="M1155 162L1206 90M1155 162L1220 104M1155 162L1212 102M1249 28L1215 80M1249 28L1238 92"/><circle class="hub" cx="1222" cy="92" r="13"/>
          <text x="1214" y="-21" textLength="17">0</text><text x="1140" y="3" textLength="17">9</text><text x="1289" y="3" textLength="12">1</text><text x="1094" y="65" textLength="17">8</text><text x="1335" y="65" textLength="17">2</text><text x="1094" y="144" textLength="17">7</text><text x="1335" y="144" textLength="17">3</text><text x="1139" y="206" textLength="17">6</text><text x="1289" y="206" textLength="17">4</text><text x="1214" y="231" textLength="17">5</text><text x="1025" y="237" textLength="131">62.046 m</text><text x="1343" y="237" textLength="68">x100</text></svg></div></div>
        <div class="pn" style="height:131px"><div class="gr"><i></i><span>×</span></div><div class="bx"><svg viewBox="1017 321 408 321">
          <path id="ckt"/><path d="M1188 471L1299 503"/><path class="hand" d="M1171 433L1222 481L1256 530"/>
          <text x="1025" y="360" textLength="126">04:52:18</text><text x="1354" y="360" textLength="66">UTC</text><text x="1026" y="631" textLength="129">Thursday</text><text x="1246" y="631" textLength="171">06/10/2021</text></svg></div></div>
      </div>
    </aside>
  </main>

  <footer class="status"><span class="rd" data-w="32">Ready</span>
    <div style="width:226px"><svg><use href="#unplug"/></svg><span data-w="149">NTRIP client: Not connected</span></div><div class="ub" style="width:116px"><span data-w="66">u-blox M8/8</span></div><div style="width:105px"><svg><use href="#plugd"/></svg><span data-w="66">COM3 19200</span></div><div style="width:125px"><span data-w="65">No file open</span></div><div style="width:45px"><span data-w="22">UBX</span></div><div style="width:46px"><span data-w="43">00:08:33</span></div><div style="width:45px"><span data-w="43">04:52:19</span></div><div class="lb" style="width:20px"><svg class="led" viewBox="0 0 16 16"><circle cx="8" cy="8" r="5" fill="#0e0" stroke="#555" stroke-dasharray="2 1"/><path d="M5 8A3 3 0 0 1 8 5" stroke="#fff" stroke-width="1.500" fill="none"/></svg></div>
  </footer>

  <div class="task">
    <div class="start"><svg width="16" height="16" viewBox="0 0 16 16"><path d="M0 2.300L6.500 1.300V7.500H0ZM7.500 1.100L16 0V7.500H7.500ZM0 8.500H6.500V14.700L0 13.700ZM7.500 8.500H16V16L7.500 14.900Z" fill="#fff"/></svg></div>
    <div class="search"><svg width="18" height="18" viewBox="0 0 18 18"><circle cx="11" cy="6.500" r="5" fill="none" stroke="#222" stroke-width="1.300"/><path d="M7.500 10L1 16.500" stroke="#222" stroke-width="1.300"/></svg><span data-w="112">ここに入力して検索</span></div>
    <div class="apps">
      <div><svg width="24" height="24" viewBox="0 0 24 24"><circle cx="11.500" cy="12" r="6.800" fill="none" stroke="#fff" stroke-width="2"/></svg></div>
      <div><svg width="24" height="24" viewBox="0 0 24 24"><path d="M2.500 4V7.500H12.500V4M2.500 19V16.500H12.500V19M2.500 9.500H12.500V14.500H2.500ZM16.500 4V8M16.500 14V19" fill="none" stroke="#fff"/><rect x="15" y="9" width="3" height="3" fill="#fff"/></svg></div>
      <div><svg width="24" height="24" viewBox="0 0 24 24"><defs><linearGradient id="e1" x2="1"><stop offset="0" stop-color="#2aa8e8"/><stop offset=".6" stop-color="#35c6c8"/><stop offset="1" stop-color="#68dd50"/></linearGradient></defs><circle cx="12" cy="12" r="12" fill="#1579cf"/><path d="M0 10A12 12 0 0 1 24 11C24 16 18 17 14.500 15C15.500 13 15 8 9 7.500C5 7.500 1 9 0 13Z" fill="url(#e1)"/><path d="M8 13C7 18 11 22 17 22.500C20 21.500 22 20 23 18C19 20 14 19 14 15C11 14 12 11 12 10C10 10 8.500 11 8 13Z" fill="#0c4f94"/><path d="M14.500 15C18 17 24 16 24 11L24 16L21 18.500C17 19 15 17 14.500 15Z" fill="#203640"/></svg></div>
      <div><svg width="24" height="24" viewBox="0 0 24 24"><path d="M1 3H10L11 5H23V20H1Z" fill="#e8a820"/><path d="M1 6H8L10 4H23V20H1Z" fill="#ffd566"/><path d="M5 21V15L7 13H17L19 15V21H15V17H9V21Z" fill="#3f90d8"/></svg></div>
      <div><svg width="24" height="24" viewBox="0 0 24 24"><path d="M6.500 7V1.500H17.500V7" fill="none" stroke="#eee" stroke-width="2"/><path d="M0 6H23V23Q23 24 22 24H1Q0 24 0 23Z" fill="#f2f2f2"/><path d="M7 11H11V15H7Z" fill="#f25022"/><path d="M12 11H16V15H12Z" fill="#7fba00"/><path d="M7 16H11V20H7Z" fill="#00a4ef"/><path d="M12 16H16V20H12Z" fill="#ffb900"/></svg></div>
      <div><svg width="24" height="24" viewBox="0 0 24 24"><path d="M0 8L12 .500L24 8V14H0Z" fill="#0f5fae"/><path d="M2 8H22V18H2Z" fill="#f4f4f4"/><path d="M0 8L12 16L24 8V23H0Z" fill="#3cc0f4"/><path d="M0 23L12 14L24 23Z" fill="#1c94e0"/><path d="M24 8L12 16L24 23Z" fill="#2aa8ec"/></svg></div>
      <div class="act"><svg width="24" height="24" viewBox="0 0 16 16"><use href="#plogo"/></svg></div>
      <div class="run"><svg width="24" height="24" viewBox="0 0 24 24"><path d="M1 14C1 8 8 3 15 3C20 3 22 7 21 11C19 18 12 23 7 22C4 21 7 18 5 17C3 17 1 17 1 14Z" fill="#b8dff0"/><circle cx="6" cy="12" r="2" fill="#e04030"/><circle cx="10" cy="7.500" r="2" fill="#40b040"/><circle cx="15" cy="6.500" r="2" fill="#f0b030"/><circle cx="11" cy="14" r="1.800" fill="#203640"/><circle cx="14" cy="19" r="1.500" fill="#3060c0"/><path d="M12 23L20 7" stroke="#e08020" stroke-width="2.500"/><path d="M18 1L24 2L22 8H19Z" fill="#d8a070"/></svg></div>
    </div>
    <svg class="tray" width="120" height="40" viewBox="1360 860 120 40"><g fill="none" stroke="#fff"><path d="M1365.500 883.500L1371.500 877L1377.500 883.500" stroke-width="1.300"/><path d="M1391.500 877.500H1402.500V884.500H1391.500M1387.500 876V880.500H1391.500V876M1388.500 873V876M1390.500 873V876M1389.500 880V885"/><circle cx="1418.500" cy="879.500" r="7"/><ellipse cx="1418.500" cy="879.500" rx="3.200" ry="7"/><path d="M1411.500 879.500H1425.500M1413 875.500H1424M1413 883.500H1420"/><circle cx="1423" cy="884" r="3.500" fill="#1d2c42"/><path d="M1421 886L1425 882"/><path d="M1436.500 877.500H1439L1442.500 874.500V885.500L1439 882.500H1436.500ZM1445 877.500L1450 882.500M1450 877.500L1445 882.500"/></g><path d="M1393 878.500H1401V883.500H1393ZM1403 879.500H1404V882.500H1403Z" fill="#fff"/></svg>
    <span class="ime">A</span>
    <div class="clock"><span data-w="26">13:52</span><span data-w="58">2021/06/10</span></div>
    <svg class="note2" width="20" height="20" viewBox="0 0 20 20"><path d="M2.500 2.500H17.500V14.500H12.500L10 17.500L7.500 14.500H2.500Z" fill="none" stroke="#fff" stroke-width="1.200"/></svg>
  </div>
</div>
<script src="app.js"></script>
</body>
</html>
```
FILE: styles.css
```css
* { box-sizing: border-box; }
body { margin: 0; width: 1600px; height: 900px; overflow: hidden; background: #fff; font: 12px/16px "Open Sans", "Noto Sans", "Noto Sans CJK JP", sans-serif; color: #111; }
i, em { font-style: normal; display: block; }
p { margin: 0; }
svg { display: block; flex: none; }
[data-w] { white-space: nowrap; flex: none; display: block; }
.defs { position: absolute; }
.app { width: 1600px; height: 900px; display: flex; flex-direction: column; }
.title { height: 22px; display: flex; align-items: center; padding: 2px 6px 0 2px; flex: none; }
.title .ic { width: 16px; height: 16px; margin-right: 5px; }
.title .wc { margin-left: auto; margin-top: -2px; }
.ln { fill: none; stroke: #000; }
.menu { height: 19px; flex: none; display: flex; gap: 14px; padding: 3px 0 0 7px; }

/* toolbars */
.bars { height: 62px; flex: none; background: #fff; border-top: 2px solid #e8e8e8; }
.tbrow { height: 30px; display: flex; border-top: 1px solid #a0a0a0; }
.tb { display: flex; align-items: center; background: #f0f0f0; border-right: 1px solid #a0a0a0; height: 29px; padding-left: 4px; box-shadow: inset 1px 1px #fff; }
.w1 { width: 254px; } .w2 { width: 588px; } .w3 { width: 165px; } .w4 { width: 549px; } .w5 { width: 205px; }
.grip { width: 2px; height: 19px; background: repeating-linear-gradient(#b8b8b8 0 2px, #f0f0f0 2px 5px); margin-right: 3px; flex: none; }
.w2 .grip { margin-left: 1px; margin-right: 3px; }
.w4 .grip { margin-left: 1px; margin-right: 3px; }
.w5 .grip { margin-left: 1px; margin-right: 2px; }
.tb b { width: 23px; height: 22px; display: flex; align-items: center; justify-content: center; flex: none; font-weight: normal; }
.tb b.a { width: 15px; }
.tb b svg { width: 16px; height: 16px; shape-rendering: crispEdges; }
.s { width: 6px; height: 18px; flex: none; background: linear-gradient(90deg, transparent 2px, #a0a0a0 2px 3px, #fff 3px 4px, transparent 4px); }
.tb b.on { background: repeating-conic-gradient(#fff 0 25%, #f0f0f0 0 50%) 0 0/2px 2px; border: 1px solid; border-color: #a0a0a0 #fff #fff #a0a0a0; padding: 1px 0 0 1px; }
.tb b.chk { background: repeating-conic-gradient(#fff 0 25%, #f0f0f0 0 50%) 0 0/2px 2px; }
.tb b.last { margin-right: 4px; }
.th em { font: 10px/10px "Liberation Sans", sans-serif; margin-left: -8px; width: 8px; }
.th { padding-left: 2px; }
.slider { flex: 1; height: 16px; display: flex; align-items: center; padding: 0 7px 0 9px; }
.thumb { width: 6px; height: 14px; border: 1px solid; border-color: #fff #696969 #696969 #fff; }
.track { flex: 1; height: 3px; background: #808080; border-bottom: 1px solid #fff; margin-top: -3px; }

/* workspace */
.work { height: 737px; flex: none; display: flex; border-top: 1px solid #a0a0a0; background: #f0f0f0; }
.mdi { width: 1128px; height: 736px; background: #ababab; position: relative; border: 1px solid #696969; border-width: 1px 0 0 1px; box-shadow: inset 1px 0 #808080; overflow: hidden; margin-right: 2px; }
.win { position: absolute; border: 1px solid #3c3c3c; border-radius: 6px 6px 0 0; display: flex; flex-direction: column; }
.back { left: 27px; top: 26px; width: 892px; height: 500px; background: linear-gradient(#bccadc, #d7e4f2 30px); box-shadow: inset 0 1px #f4f8fb; }
.front { left: 53px; top: 52px; width: 892px; height: 500px; background: linear-gradient(#9ab6d3, #b9d1ea 34px); border-color: #101010; box-shadow: inset 0 1px #fff, inset -1px -1px #35c3ea; }
.wt { height: 30px; display: flex; align-items: center; padding: 5px 9px 0 8px; color: #111; flex: none; }
.back .wt { color: #8b95a1; padding-top: 6px; }
.psq { width: 14px; height: 15px; margin-right: 7px; margin-top: -1px; }
.ctl { margin-left: auto; margin-top: -1px; }
.back .ctl { margin-top: -2px; }
.bclient { margin: 0 7px 7px; flex: 1; background: #f0f0f0; border: 1px solid #696969; border-width: 1px 0 0 1px; }
.tree { height: 417px; background: #fff linear-gradient(90deg, transparent 9px, #888 9px 10px, transparent 10px); }
.bsc { width: 17px; height: 17px; }
.btool { height: 24px; padding: 5px 3px; }
.btool svg { width: 16px; height: 16px; shape-rendering: crispEdges; }
.client { margin: 0 7px 7px; flex: 1; background: #f0f0f0; display: flex; flex-direction: column; }
.split { height: 435px; display: flex; gap: 5px; border-bottom: 1px solid #fff; flex: none; }
.list { width: 253px; border: 1px solid #696969; border-width: 1px 0 0 1px; display: flex; background: #fff; border-right: 1px solid #fff; }
.rows { flex: 1; color: #767676; padding-top: 1px; }
.rows p { height: 18px; line-height: 18px; margin-left: 3px; }
.rows p.sel { width: 126px; outline: 1px dotted #000; background: #f0f0f0; outline-offset: 0; box-shadow: -1px 0 #f0f0f0; }
.scroll { width: 16px; background: #f0f0f0; display: flex; flex-direction: column; }
.scroll svg { width: 16px; height: 18px; margin-top: 1px; }
.scroll i { background: #cdcdcd; height: 195px; margin: 154px 0 48px; }
.pane { flex: 1; border: 1px solid #696969; border-width: 1px 0 0 1px; padding: 11px 11px 0 11px; font: 12px/16px "Liberation Sans", sans-serif; color: #000; }
.phead { height: 24px; display: flex; justify-content: space-between; border-bottom: 1px solid #a0a0a0; box-shadow: 0 1px #fff; padding-right: 2px; }
.form { width: 594px; height: 376px; margin-top: 12px; border: 1px solid #696969; box-shadow: 1px 1px #fff; padding: 21px 0 0 11px; }
.row { display: flex; align-items: flex-start; }
.row label { width: 154px; display: flex; justify-content: flex-end; padding-right: 7px; }
.inp { width: 118px; height: 28px; background: #fff; border: 1px solid; border-color: #a0a0a0 #fff #fff #a0a0a0; box-shadow: inset 1px 1px #696969, inset -1px -1px #e3e3e3; padding: 1px 0 0 3px; }
.row em { margin-left: 8px; padding-top: 6px; }
.mode label { padding-top: 1px; }
.combo { height: 20px; padding: 2px 2px 2px 3px; display: flex; justify-content: space-between; line-height: 17px; }
.combo i { width: 16px; height: 16px; margin-top: -1px; margin-right: -1px; background: #f0f0f0; box-shadow: inset -1px -1px #696969, inset 1px 1px #fff; }
.group { width: 311px; border: 1px solid #a0a0a0; box-shadow: 1px 1px #fff, inset 1px 1px #fff; }
.group .row { margin-left: -1px; }
.leg { margin: -9px 0 0 6px; background: #f0f0f0; padding: 0 2px; height: 16px; width: fit-content; box-sizing: content-box; }
.g1 { height: 97px; margin-top: 7px; }
.r1 { height: 32px; margin-top: 3px; } .r1 label { padding: 2px 9px 0 0; } .r1 em { padding-top: 5px; }
.r2 label { padding: 1px 4px 0 0; } .r2 em { padding-top: 6px; }
.note { margin: 5px 0 0 12px; }
.g2 { height: 173px; margin-top: 31px; color: #a0a0a0; text-shadow: 1px 1px #fff; }
.g2 .leg { color: #000; text-shadow: none; }
.g2 .inp { background: #f0f0f0; color: #6d6d6d; text-shadow: none; }
.x1 { height: 31px; margin-top: 6px; } .x2 { height: 33px; } .x3 { height: 34px; } .x4 { height: 26px; }
.x1 label, .x2 label { padding-top: 4px; }
.x3 label { padding-top: 3px; }
.x1 em, .x2 em { padding-top: 4px; }
.x3 em, .x4 em { padding-top: 5px; }
.x4 .inp { height: 26px; }
.check { display: flex; margin: 8px 0 0 3px; gap: 6px; }
.check i { width: 12px; height: 12px; margin-top: 1px; border: 1px solid; border-color: #a0a0a0 #fff #fff #a0a0a0; box-shadow: inset 1px 1px #696969; }
.wtool { flex: 1; display: flex; align-items: center; padding-left: 4px; padding-top: 1px; }
.wtool svg { width: 16px; height: 16px; shape-rendering: crispEdges; }
.wtool > .s { margin: 0 5px 0 6px; }
.send { width: 57px; height: 21px; border: 1px solid; border-color: #fff #808080 #808080 #fff; display: flex; align-items: center; gap: 3px; padding-left: 4px; margin: 0 5px 0 -4px; }
.wtool .pl { margin: 0 8px 0 2px; }
.auto { width: 27px; height: 21px; border: 1px solid; border-color: #808080 #fff #fff #808080; display: flex; align-items: center; justify-content: center; background: #f8f8f8; }
.wtool > .auto + .s { margin: 0 5px 0 0; }
.m2 { margin-left: 11px; } .m3 { margin-left: 12px; }
.wtool > .m4 { margin: 0 6px 0 4px; }
.field { flex: 1; height: 18px; margin: 0 1px 0 8px; border: 1px solid; border-color: #808080 #fff #fff #808080; box-shadow: inset 1px 1px #696969; }

/* dock */
.dock { display: flex; height: 736px; }
.col { display: flex; flex-direction: column; }
.c1 { width: 322px; } .c2 { width: 148px; border-left: 1px solid #a0a0a0; }
.pn { border-bottom: 1px solid #a0a0a0; box-shadow: inset 0 1px #fff, inset 1px 0 #fff; padding: 0 4px 4px 3px; display: flex; flex-direction: column; flex: none; }
.c2 .pn { padding-left: 4px; }
.c2 .pn .gr { padding-left: 1px; }
.gr { height: 16px; display: flex; align-items: center; gap: 5px; flex: none; padding: 1px 2px 0 1px; }
.gr i { flex: 1; height: 6px; background: linear-gradient(#fff 0 2px, #a0a0a0 2px 3px, #fff 3px 5px, #a0a0a0 5px); border-right: 1px solid #a0a0a0; }
.gr span { width: 7px; font: bold 13px/10px "Liberation Sans", sans-serif; color: #000; }
.bx { flex: 1; background: #000; border: 2px solid; border-color: #808080 #fff #fff #808080; min-height: 0; }
.c1 .bx { width: 315px; border-width: 2px 1px 1px 2px; }
.c2 .bx { width: 139px; border-width: 2px 1px 1px 2px; }
.bx svg { width: 100%; height: 100%; shape-rendering: crispEdges; fill: none; stroke: #c0c0c0; stroke-width: 3; overflow: hidden; }
.bx text { stroke: none; fill: #c0c0c0; font: 36px "Liberation Sans", sans-serif; }
.bx .db text { font-size: 48px; }
.bx .k { fill: #000; stroke: none; }
.bx .dg { stroke: #505050; }
.bx .f { fill: #c0c0c0; stroke: none; }
.bx .gn { stroke: #00e000; }
.bx .cell { fill: #404040; stroke: none; }
.bx .gb { fill: #00c000; stroke: none; }
.bx .g { fill: #0f0; }
.bx .hub { fill: #000; stroke-width: 4; }
.bx .ndl { stroke-width: 4; }
.bx .hand { stroke-width: 7; }

/* status bar */
.status { height: 20px; flex: none; background: #f0f0f0; display: flex; gap: 3px; box-shadow: inset 0 1px #fff; padding-top: 3px; color: #222; }
.status .rd { margin: 0 793px 0 2px; }
.status div { height: 17px; border: 1px solid; border-color: #a0a0a0 #fff #fff #a0a0a0; display: flex; align-items: center; gap: 4px; padding-left: 1px; flex: none; }
.status .ub { margin-left: 23px; }
.status svg { width: 16px; height: 16px; }

/* taskbar */
.task { height: 40px; flex: none; display: flex; background: linear-gradient(90deg, #20353f, #20353f 45%, #1c2a42 75%, #1a2440); color: #fff; }
.start { width: 48px; display: flex; align-items: center; justify-content: center; }
.search { width: 344px; background: #f0f0f0; border: 1px solid #bbb; display: flex; align-items: center; padding-left: 10px; gap: 10px; color: #333; font: 14px/20px "Noto Sans CJK JP", sans-serif; }
.search span { margin-top: -2px; }
.apps { display: flex; }
.apps div { width: 49px; display: flex; align-items: center; justify-content: center; }
.apps div.act { width: 48px; margin-left: 1px; background: #4d5d66; box-shadow: inset 0 -2px #76b9ed; }
.apps div.run { background: linear-gradient(90deg, transparent 5px, #76b9ed 5px 36px, #5a8fbb 36px 45px, transparent 45px) 0 100%/100% 2px no-repeat; }
.tray { margin-left: 575px; }
.ime { font: 18px/40px "Open Sans", sans-serif; width: 22px; margin-left: -20px; }
.clock { width: 60px; margin-left: 1px; display: flex; flex-direction: column; align-items: center; padding-top: 3px; gap: 2px; transform: translateX(1px); }
.clock span { line-height: 16px; }
.note2 { margin: 9px 0 0 15px; }
```
FILE: app.js
```js
// Spread each label over its nominal width
document.querySelectorAll('[data-w]').forEach(function (el) {
  var w = +el.dataset.w, r = document.createRange();
  r.selectNodeContents(el);
  var n = r.getBoundingClientRect().width;
  el.style.letterSpacing = ((w - n) / el.textContent.length).toFixed(3) + 'px';
});
document.querySelectorAll('text[textLength]').forEach(function (t) {
  t.setAttribute('lengthAdjust', 'spacingAndGlyphs');
});

// Dial ticks: returns path data for n ticks between two angles
function ticks(cx, cy, from, to, n, fn) {
  var d = '';
  for (var i = 0; i <= n; i++) {
    var a = (from + (to - from) * i / n) * Math.PI / 180, r = fn(i);
    d += 'M' + (cx + Math.sin(a) * r[0]).toFixed(1) + ' ' + (cy - Math.cos(a) * r[0]).toFixed(1) +
      'L' + (cx + Math.sin(a) * r[1]).toFixed(1) + ' ' + (cy - Math.cos(a) * r[1]).toFixed(1);
  }
  return d;
}
document.getElementById('spt').setAttribute('d', ticks(1222, 241, -135, 135, 25, function (i) { return i % 5 ? [83, 94] : [86, 101]; }));
document.getElementById('alt2').setAttribute('d', ticks(1222, 92, 0, 360, 50, function (i) { return i % 5 ? [84, 95] : [83, 107]; }));
document.getElementById('ckt').setAttribute('d', ticks(1222, 481, 0, 360, 60, function (i) { return i % 15 === 0 ? [94, 119] : i % 5 ? [94, 101] : [92, 107]; }));

// Compass rose: diagonal points below, cardinal points on top
var rose = '';
[[45, 78, 30], [0, 107, 32]].forEach(function (k) {
  for (var q = 0; q < 4; q++) {
    var t = k[0] + q * 90, y = -k[2], x = k[2] * 0.45;
    rose += '<g transform="rotate(' + t + ')"><path d="M0 0L' + x + ' ' + y + 'L0 ' + (-k[1]) + 'Z" fill="#000" stroke-width="2.5"/>' +
      '<path d="M0 0L' + (-x) + ' ' + y + 'L0 ' + (-k[1]) + 'Z" fill="#c0c0c0"/></g>';
  }
});
document.getElementById('roseg').innerHTML = rose;

// World map: graticule, coastlines, dense border regions
var seed = 7;
function rnd() { seed = (seed * 16807) % 2147483647; return seed / 2147483647; }
function rough(pts, j) {
  var d = '';
  for (var i = 0; i + 3 < pts.length; i += 2) {
    var x0 = pts[i], y0 = pts[i + 1], x1 = pts[i + 2], y1 = pts[i + 3];
    var n = Math.max(1, Math.round(Math.hypot(x1 - x0, y1 - y0) / 7));
    if (!i) d += 'M' + x0 + ' ' + y0;
    for (var s = 1; s <= n; s++) d += 'L' + (x0 + (x1 - x0) * s / n + (rnd() - .5) * j).toFixed(1) + ' ' + (y0 + (y1 - y0) * s / n + (rnd() - .5) * j).toFixed(1);
  }
  return d;
}
function cloud(x, y, w, h, n) {
  var d = '';
  for (var i = 0; i < n; i++) {
    var a = rnd() * 6.28, r = Math.sqrt(rnd()), px = x + Math.cos(a) * r * w, py = y + Math.sin(a) * r * h;
    d += 'M' + px.toFixed(0) + ' ' + py.toFixed(0);
    for (var k = 0; k < 3; k++) { px += (rnd() - .5) * 18; py += (rnd() - .5) * 11; d += 'L' + px.toFixed(0) + ' ' + py.toFixed(0); }
  }
  return d;
}
var v = '', h = '';
for (var x = 83; x < 981; x += 39.15) v += 'M' + x.toFixed(0) + ' 399V642';
for (var y = 405; y < 642; y += 13) h += 'M45 ' + y + 'H981';
var coast = [
  [45, 455, 75, 462, 92, 474, 60, 472], [85, 457, 110, 453, 145, 455, 190, 458, 230, 455, 265, 462, 300, 458, 340, 480, 370, 484, 330, 492, 318, 512],
  [80, 475, 120, 470, 160, 472, 190, 490, 230, 500, 270, 508, 300, 515, 318, 520, 375, 521, 425, 528, 385, 545, 345, 562, 325, 562, 330, 545, 310, 520],
  [190, 445, 230, 432, 280, 425, 320, 412, 360, 418, 430, 410, 478, 422, 455, 450, 400, 468, 372, 452, 350, 425], [455, 462, 475, 462],
  [470, 505, 490, 480, 530, 465, 580, 460, 620, 470, 680, 455, 740, 440, 770, 425, 800, 440, 860, 446, 905, 450, 981, 466],
  [470, 508, 500, 520, 545, 530, 580, 540, 610, 535, 640, 515, 700, 500, 715, 515, 740, 490, 760, 510, 800, 525, 840, 520],
  [640, 485, 700, 490, 760, 485, 830, 490, 880, 480, 900, 465, 981, 470], [805, 545, 830, 533, 870, 530, 910, 538, 905, 550, 870, 548, 840, 542, 805, 545],
  [545, 430, 580, 428], [630, 423, 680, 422], [750, 425, 800, 438], [870, 440, 910, 440],
  [105, 605, 160, 600, 230, 595, 300, 597, 340, 575, 365, 580, 330, 600, 305, 610, 350, 625, 400, 618, 450, 600, 500, 593, 560, 590, 640, 583, 700, 587, 780, 580, 850, 582, 930, 590, 950, 590, 930, 605, 940, 630, 981, 635],
  [105, 605, 115, 632, 140, 640]
];
var bright = coast.map(function (c) { return rough(c, 6); }).join('');
var dense = cloud(250, 440, 60, 14, 60) + cloud(320, 465, 45, 20, 30) + cloud(330, 430, 30, 14, 30) + cloud(345, 550, 22, 14, 12) + cloud(335, 600, 35, 22, 22) + cloud(555, 480, 65, 20, 70) + cloud(575, 515, 75, 22, 70) + cloud(680, 490, 60, 25, 30) + cloud(800, 510, 45, 14, 35) + cloud(860, 490, 45, 14, 22) + cloud(770, 432, 40, 10, 15) + cloud(565, 430, 22, 5, 10) + cloud(655, 424, 25, 4, 8) + cloud(870, 540, 40, 8, 8);
document.getElementById('world').innerHTML =
  '<path d="' + h + '" stroke="#1c1c1c"/><path d="' + v + '" stroke="#505050"/>' +
  '<path d="' + cloud(110, 520, 70, 25, 14) + cloud(900, 530, 70, 20, 12) + '" stroke="#2c2c2c"/>' +
  '<g shape-rendering="geometricPrecision"><path d="' + dense + '" stroke="#d0d0d0" stroke-width="1.9"/>' +
  '<path d="' + bright + '" stroke="#e0e0e0" stroke-width="2.8"/></g>' +
  '<circle cx="514" cy="520" r="15" fill="#000" stroke="#fff"/><path d="M514 535V546"/>';
```
